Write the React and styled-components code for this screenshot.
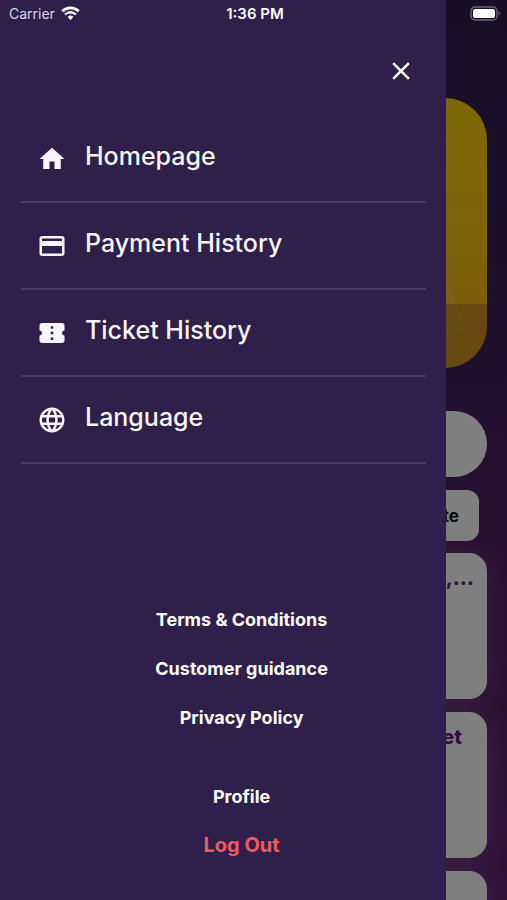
import React from 'react';
import styled, { createGlobalStyle } from 'styled-components';
import {
  MdClose,
  MdConfirmationNumber,
  MdCreditCard,
  MdHome,
  MdLanguage,
} from 'react-icons/md';

const GlobalStyle = createGlobalStyle`
  * {
    box-sizing: border-box;
  }

  body {
    margin: 0;
    background: #180e25;
    font-family: Inter, 'Noto Sans', sans-serif;
    -webkit-font-smoothing: antialiased;
  }
`;

const Screen = styled.div`
  position: relative;
  min-height: 100vh;
  overflow: hidden;
`;

/* Home page, sits behind the open drawer */
const Page = styled.main`
  position: absolute;
  inset: 0;
  overflow: hidden;
  display: flex;
  flex-direction: column;
  padding: 98px 20px 0;
  background: linear-gradient(180deg, #301e4a 0%, #40205c 40%, #50245e 65%, #60286e 100%);
`;

const Scrim = styled.div`
  position: absolute;
  inset: 0;
  background: rgba(0, 0, 0, 0.5);
`;

const Banner = styled.section`
  flex: none;
  display: flex;
  flex-direction: column;
  justify-content: flex-end;
  align-items: flex-end;
  height: 270px;
  border-radius: 42px;
  overflow: hidden;
  background: linear-gradient(180deg, #fed010 0%, #fcc814 45%, #f8b81c 80%, #fab818 100%);
`;

const BannerArt = styled.svg`
  display: block;
  margin-bottom: -36px;
`;

const BannerStrip = styled.div`
  align-self: stretch;
  height: 64px;
  background: rgba(120, 66, 50, 0.32);
`;

const SearchPill = styled.div`
  flex: none;
  height: 66px;
  margin-top: 43px;
  border-radius: 33px;
  background: #ffffff;
`;

const FilterButton = styled.button`
  flex: none;
  align-self: flex-end;
  width: 120px;
  height: 51px;
  margin: 13px 8px 12px 0;
  padding: 0 20px;
  border: 0;
  border-radius: 12px;
  background: #ffffff;
  color: #000000;
  font: 700 17px Inter, sans-serif;
  text-align: right;
`;

const Card = styled.article`
  flex: none;
  height: 146px;
  margin-bottom: 13px;
  padding: 12px ${({ $inset }) => $inset}px;
  border-radius: 18px;
  background: #ffffff;
  box-shadow: 0 0 24px rgba(170, 120, 190, 0.35);
  color: #662480;
  font-size: 20px;
  font-weight: 800;
  line-height: 26px;
  text-align: right;
`;

const StatusBar = styled.header`
  position: absolute;
  top: 0;
  left: 0;
  right: 0;
  display: grid;
  grid-template-columns: 1fr auto 1fr;
  align-items: center;
  height: 27px;
  padding: 0 6px 0 9px;
  color: #ffffff;
`;

const Carrier = styled.span`
  display: flex;
  align-items: center;
  gap: 6px;
  color: #dcd8e4;
  font-size: 14px;
`;

const Clock = styled.span`
  font-size: 15px;
  font-weight: 600;
`;

const Battery = styled.svg`
  justify-self: end;
`;

const Drawer = styled.aside`
  position: relative;
  display: flex;
  flex-direction: column;
  width: 88%;
  min-height: 100vh;
  padding: 56px 20px 30px 21px;
  background: #2f1f4b;
  color: #ffffff;
`;

const CloseButton = styled.button`
  align-self: flex-end;
  display: flex;
  margin: 0 10px 30px 0;
  padding: 0;
  border: 0;
  background: none;
  color: inherit;
  font-size: 30px;
  cursor: pointer;
`;

const Menu = styled.nav`
  display: flex;
  flex-direction: column;
`;

const MenuItem = styled.a`
  display: flex;
  align-items: center;
  gap: 18px;
  height: 87px;
  padding: 0 16px;
  border-bottom: 2px solid #463a66;
  color: #f8f5fc;
  text-decoration: none;

  svg {
    flex: none;
    font-size: 30px;
  }
`;

const MenuLabel = styled.span`
  padding-bottom: 6px;
  font-size: 25px;
  font-weight: 500;
  line-height: 32px;
`;

const Footer = styled.footer`
  display: flex;
  flex-direction: column;
  align-items: center;
  margin-top: auto;
  padding-left: 36px;
`;

const LinkGroup = styled.div`
  display: flex;
  flex-direction: column;
  align-items: center;
  margin-bottom: 30px;
`;

const FooterLink = styled.a`
  color: #ffffff;
  font-size: 18px;
  font-weight: 700;
  line-height: 49px;
  text-decoration: none;
`;

const LogOutButton = styled.button`
  padding: 0;
  border: 0;
  background: none;
  color: #ee5a5f;
  font: 700 20px/49px Inter, sans-serif;
  cursor: pointer;
`;

const menuItems = [
  { label: 'Homepage', icon: MdHome },
  { label: 'Payment History', icon: MdCreditCard },
  { label: 'Ticket History', icon: MdConfirmationNumber },
  { label: 'Language', icon: MdLanguage },
];

const footerLinks = ['Terms & Conditions', 'Customer guidance', 'Privacy Policy'];

const WifiIcon = () => (
  <svg width="19" height="15" viewBox="0 0 19 15" fill="none" aria-hidden="true">
    <path d="M1.2 5.2a12 12 0 0 1 16.6 0" stroke="#fff" strokeWidth="2.6" />
    <path d="M4.1 8.5a7.7 7.7 0 0 1 10.8 0" stroke="#fff" strokeWidth="2.4" />
    <path d="M6.6 11a4.2 4.2 0 0 1 5.8 0l-2.9 3z" fill="#fff" />
  </svg>
);

const BatteryIcon = () => (
  <Battery width="31" height="15" viewBox="0 0 31 15" aria-hidden="true">
    <rect x="1" y="1" width="26" height="13" rx="4" fill="none" stroke="#6d6775" strokeWidth="1.3" />
    <rect x="3" y="3" width="22" height="9" rx="2" fill="#fff" />
    <path d="M28.6 5.3c1.6.6 1.6 3.8 0 4.4z" fill="#6d6775" />
  </Battery>
);

const App = () => {
  return (
    <>
      <GlobalStyle />
      <Screen>
        <Page>
          <Banner>
            <BannerArt width="54" height="60" viewBox="0 0 54 60" aria-hidden="true">
              <path d="M10 0L30 48L4 54" fill="none" stroke="#ffd070" strokeWidth="6" opacity="0.25" />
            </BannerArt>
            <BannerStrip />
          </Banner>
          <SearchPill />
          <FilterButton type="button">te</FilterButton>
          <Card $inset={13}>a,…</Card>
          <Card $inset={25}>et</Card>
          <Card $inset={25} />
        </Page>
        <Scrim />
        <Drawer>
          <CloseButton type="button" aria-label="Close">
            <MdClose />
          </CloseButton>
          <Menu>
            {menuItems.map(({ label, icon: Icon }) => (
              <MenuItem key={label} href="#">
                <Icon />
                <MenuLabel>{label}</MenuLabel>
              </MenuItem>
            ))}
          </Menu>
          <Footer>
            <LinkGroup>
              {footerLinks.map((label) => (
                <FooterLink key={label} href="#">{label}</FooterLink>
              ))}
            </LinkGroup>
            <FooterLink href="#">Profile</FooterLink>
            <LogOutButton type="button">Log Out</LogOutButton>
          </Footer>
        </Drawer>
        <StatusBar>
          <Carrier>
            Carrier
            <WifiIcon />
          </Carrier>
          <Clock>1:36 PM</Clock>
          <BatteryIcon />
        </StatusBar>
      </Screen>
    </>
  );
};

export default App;
